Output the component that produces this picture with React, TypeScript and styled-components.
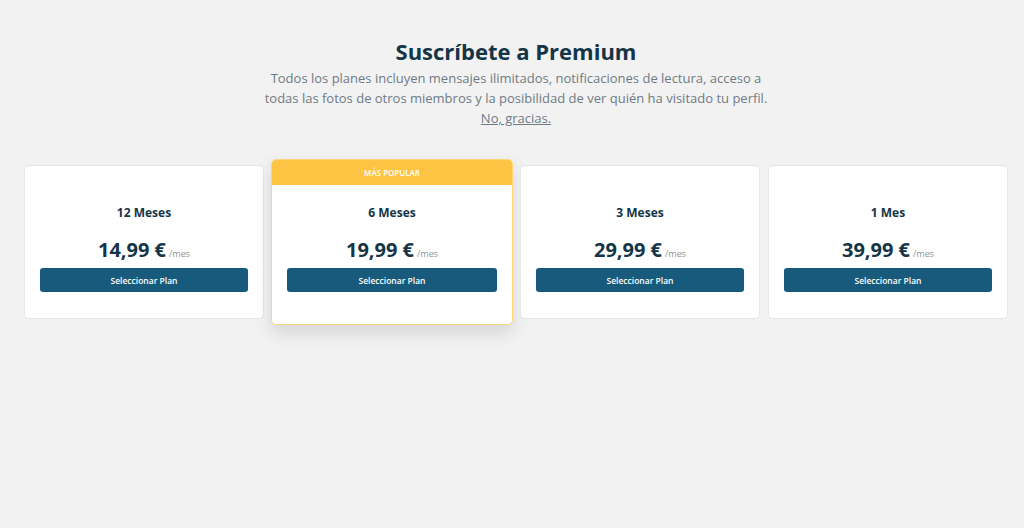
import React from 'react';
import styled, { createGlobalStyle } from 'styled-components';

const GlobalStyle = createGlobalStyle`
  html, body {
    margin: 0;
    padding: 0;
    background: #f2f2f2;
    font-family: "Open Sans", "Noto Sans", sans-serif;
  }
`;

const Page = styled.div`
  min-height: 528px;
  padding: 35px 16px 0 24px;
  box-sizing: border-box;
  display: flex;
  flex-direction: column;
  align-items: center;
`;

const Title = styled.h1`
  margin: 0;
  font-size: 22px;
  line-height: 32px;
  font-weight: 700;
  color: #143447;
`;

const Subtitle = styled.p`
  margin: 1px 0 0;
  font-size: 13px;
  line-height: 20px;
  color: #6f7b84;
  text-align: center;
`;

const SkipLink = styled.a`
  color: #6f7b84;
  text-decoration: underline;
  cursor: pointer;
`;

const PlanGrid = styled.div`
  margin-top: 37px;
  width: 984px;
  display: grid;
  grid-template-columns: repeat(4, 240px);
  gap: 8px;
  align-items: start;
`;

const Card = styled.div<{ $popular?: boolean }>`
  background: #fff;
  border-radius: 5px;
  border: 1px solid ${(p) => (p.$popular ? '#fcd77a' : '#e6e6e6')};
  box-sizing: border-box;
  overflow: hidden;
  display: flex;
  flex-direction: column;
  margin: ${(p) => (p.$popular ? '-6px -1px 0' : '0')};
  box-shadow: ${(p) => (p.$popular ? '0 8px 18px rgba(0, 0, 0, 0.12)' : 'none')};
`;

const Badge = styled.div`
  height: 25px;
  background: #fdc342;
  color: #fff;
  font-size: 8px;
  font-weight: 600;
  text-transform: uppercase;
  display: flex;
  align-items: center;
  justify-content: center;
`;

const CardBody = styled.div<{ $popular?: boolean }>`
  padding: ${(p) => (p.$popular ? '19px 15px 32px' : '38px 15px 26px')};
  display: flex;
  flex-direction: column;
  align-items: center;
`;

const PlanName = styled.div`
  font-size: 12px;
  line-height: 18px;
  font-weight: 700;
  color: #143447;
`;

const PriceRow = styled.div`
  margin-top: 14px;
  height: 28px;
  display: flex;
  align-items: baseline;
  gap: 3px;
`;

const Amount = styled.span`
  font-size: 20px;
  line-height: 28px;
  font-weight: 700;
  color: #143447;
`;

const Per = styled.span`
  font-size: 9px;
  color: #8a949b;
`;

const SelectButton = styled.button`
  margin-top: 4px;
  width: 100%;
  height: 24px;
  border: none;
  border-radius: 3px;
  background: #175a7c;
  color: #fff;
  font-family: "Open Sans", "Noto Sans", sans-serif;
  font-size: 8.5px;
  font-weight: 600;
  cursor: pointer;
`;

const plans = [
  { name: '12 Meses', price: '14,99 €' },
  { name: '6 Meses', price: '19,99 €', popular: true },
  { name: '3 Meses', price: '29,99 €' },
  { name: '1 Mes', price: '39,99 €' },
];

export default function App() {
  return (
    <>
      <GlobalStyle />
      <Page>
        <Title>Suscríbete a Premium</Title>
        <Subtitle>
          Todos los planes incluyen mensajes ilimitados, notificaciones de lectura, acceso a
          <br />
          todas las fotos de otros miembros y la posibilidad de ver quién ha visitado tu perfil.
          <br />
          <SkipLink>No, gracias.</SkipLink>
        </Subtitle>
        <PlanGrid>
          {plans.map((plan) => (
            <Card key={plan.name} $popular={plan.popular}>
              {plan.popular && <Badge>Más popular</Badge>}
              <CardBody $popular={plan.popular}>
                <PlanName>{plan.name}</PlanName>
                <PriceRow>
                  <Amount>{plan.price}</Amount>
                  <Per>/mes</Per>
                </PriceRow>
                <SelectButton>Seleccionar Plan</SelectButton>
              </CardBody>
            </Card>
          ))}
        </PlanGrid>
      </Page>
    </>
  );
}
